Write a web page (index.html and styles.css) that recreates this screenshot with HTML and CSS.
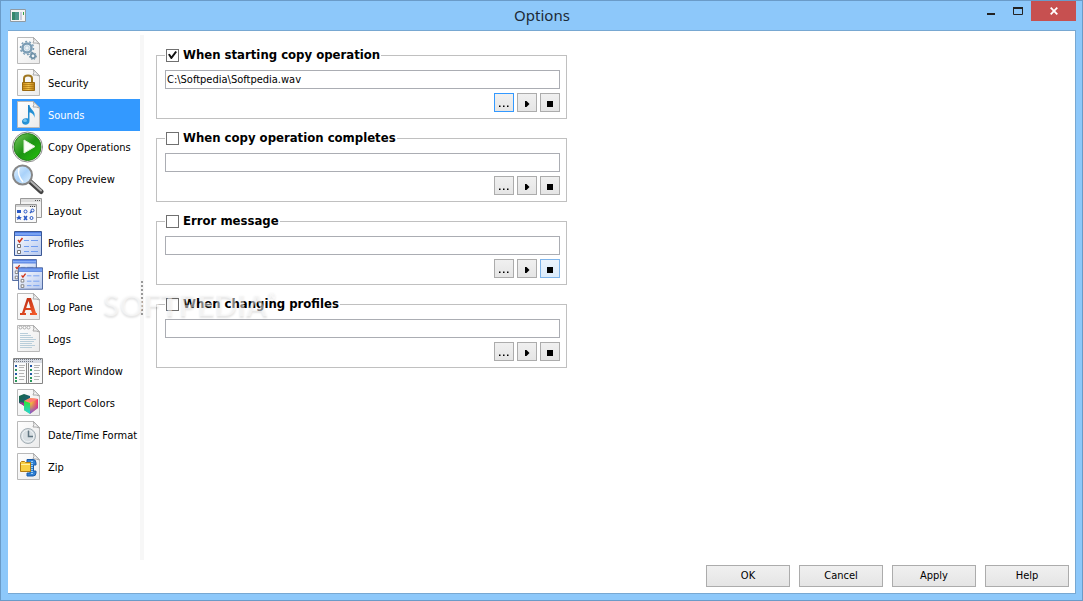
FILE: index.html
```html
<!DOCTYPE html>
<html lang="en">
<head>
<meta charset="utf-8">
<title>Options</title>
<link rel="stylesheet" href="styles.css">
</head>
<body>
<svg class="defs" aria-hidden="true">
  <defs>
    <linearGradient id="paper" x1="0" y1="0" x2="1" y2="1"><stop offset="0" stop-color="#fff"/><stop offset="1" stop-color="#ebebeb"/></linearGradient>
    <linearGradient id="gold" x1="0" y1="0" x2="1" y2="0"><stop offset="0" stop-color="#c98a14"/><stop offset=".5" stop-color="#f3c44c"/><stop offset="1" stop-color="#b47a10"/></linearGradient>
    <linearGradient id="bluebar" x1="0" y1="0" x2="0" y2="1"><stop offset="0" stop-color="#3a6bdc"/><stop offset=".5" stop-color="#8db4fa"/><stop offset="1" stop-color="#3c6cd8"/></linearGradient>
    <linearGradient id="pane" x1="0" y1="0" x2="1" y2="1"><stop offset="0" stop-color="#fff"/><stop offset="1" stop-color="#b5c8ee"/></linearGradient>
    <linearGradient id="green" x1="0" y1="0" x2="1" y2="1"><stop offset="0" stop-color="#7cc763"/><stop offset=".5" stop-color="#1c9413"/><stop offset="1" stop-color="#26c40c"/></linearGradient>
    <linearGradient id="note" x1="0" y1="0" x2="1" y2="1"><stop offset="0" stop-color="#1672b8"/><stop offset="1" stop-color="#2fa6e8"/></linearGradient>
    <linearGradient id="red" x1="0" y1="0" x2="1" y2="1"><stop offset="0" stop-color="#b3220c"/><stop offset="1" stop-color="#f8602e"/></linearGradient>
    <linearGradient id="rainbow" x1="0" y1="0" x2="1" y2="0"><stop offset="0" stop-color="#18e020"/><stop offset=".5" stop-color="#f4f020"/><stop offset="1" stop-color="#f02878"/></linearGradient>
    <linearGradient id="limecyan" x1="0" y1="0" x2="0" y2="1"><stop offset="0" stop-color="#2ee432"/><stop offset="1" stop-color="#27cfe5"/></linearGradient>
    <linearGradient id="pinkblue" x1="0" y1="0" x2="0" y2="1"><stop offset="0" stop-color="#f53a5a" stop-opacity="0"/><stop offset="1" stop-color="#6a4bf0"/></linearGradient>
    <linearGradient id="dark" x1="0" y1="0" x2="1" y2="1"><stop offset="0" stop-color="#136840"/><stop offset="1" stop-color="#205a90"/></linearGradient>
    <linearGradient id="glass" x1="0" y1="0" x2="1" y2="1"><stop offset="0" stop-color="#e8f5ff"/><stop offset=".5" stop-color="#a9d2fa"/><stop offset="1" stop-color="#e2f3ff"/></linearGradient>
    <symbol id="doc" viewBox="0 0 32 32">
      <path d="M5.5 2.500H21.500L27.500 8.500V28.500H5.500Z" fill="url(#paper)" stroke="#b9b9b9"/>
      <path d="M21.500 2.500Q22.500 6 21 8Q24 7.500 27.500 9Z" fill="#f5f5f5" stroke="#a8a8a8"/>
    </symbol>
    <symbol id="list" viewBox="0 0 28 25">
      <path d="M.5.5H27.500V24.500H.5Z" fill="url(#pane)" stroke="#3a5794"/>
      <path d="M1 1H27V5H1Z" fill="url(#bluebar)"/>
      <path d="M4 9L5.500 11L8.500 7" fill="none" stroke="#cf3218" stroke-width="1.500"/>
      <path d="M3.500 13.500H6.500V16.500H3.500ZM3.500 19.500H6.500V22.500H3.500Z" fill="#fff" stroke="#777"/>
      <path d="M10 9.500H15M17 9.500H24M10 15.500H15M17 15.500H24M10 20.500H15M17 20.500H24" stroke="#6f9cf0"/>
    </symbol>
    <symbol id="dots" viewBox="0 0 18 17"><path d="M4 11.500H5.500V13H4ZM8 11.500H9.500V13H8ZM12 11.500H13.500V13H12Z"/></symbol>
    <symbol id="play" viewBox="0 0 18 17"><path d="M7 7H8.500L11.500 10L8.500 13H7Z"/></symbol>
    <symbol id="stop" viewBox="0 0 18 17"><path d="M6 7H12V13H6Z"/></symbol>
  </defs>
</svg>

<div class="window">
  <header class="titlebar">
    <svg class="app-icon" width="16" height="14" viewBox="0 0 16 14" aria-hidden="true">
      <path d="M.5.5H15.500V12.500H.5Z" fill="#f4f4f4" stroke="#8f9aa3"/><path d="M2 3H9V11H2Z" fill="#35876c"/><path d="M5 3H9V11H5Z" fill="#5b9fa0" opacity=".6"/><path d="M10 3H12V11H10Z" fill="#ccd"/><path d="M13 3H14V6H13Z" fill="#36a14a"/>
    </svg>
    <h1 class="title">Options</h1>
    <div class="window-controls">
      <button class="control" type="button" aria-label="Minimize"><svg width="8" height="10" viewBox="0 0 8 10"><path d="M0 7H8V9H0Z" fill="#222"/></svg></button>
      <button class="control" type="button" aria-label="Maximize"><svg width="10" height="8" viewBox="0 0 10 8"><path d="M.5 1H9.500V7.500H.5Z" fill="none" stroke="#222"/><path d="M0 0H10V2H0Z" fill="#222"/></svg></button>
      <button class="control close" type="button" aria-label="Close"><svg width="8" height="8" viewBox="0 0 8 8"><path d="M.7.700L7.300 7.300M7.300.700L.7 7.300" stroke="#fff" stroke-width="1.800"/></svg></button>
    </div>
  </header>

  <main class="client">
    <div class="content">
      <nav class="sidebar" aria-label="Option pages">
        <button class="page" type="button"><svg class="icon" viewBox="0 0 32 32"><use href="#doc"/><circle cx="15" cy="13" r="4.500" fill="#eef4f8" stroke="#7b9db5" stroke-width="2.500"/><circle cx="15" cy="13" r="6.500" fill="none" stroke="#7b9db5" stroke-width="1.500" stroke-dasharray="2 2"/><circle cx="15" cy="13" r="2.200" fill="none" stroke="#b8cedc"/><circle cx="21" cy="21" r="2.200" fill="#eef4f8" stroke="#6489a2" stroke-width="1.500"/><circle cx="21" cy="21" r="3.500" fill="none" stroke="#6489a2" stroke-dasharray="1.500 1.500"/></svg>General</button>
        <button class="page" type="button"><svg class="icon" viewBox="0 0 32 32"><use href="#doc"/><path d="M12 16V11.500Q12 8.500 16 8.500T20 11.500V16" fill="none" stroke="#9e7620" stroke-width="2"/><path d="M10.500 15.500H22.500V23.500H10.500Z" fill="url(#gold)" stroke="#9a6911"/><path d="M11 17.500H22M11 19.500H22M11 21.500H22" stroke="#a97212" opacity=".7"/></svg>Security</button>
        <button class="page selected" type="button" aria-current="page"><svg class="icon" viewBox="0 0 32 32"><use href="#doc"/><path d="M16 6H17.500C18 11 24 11 22.500 19C22 15 19 13.500 17.500 13.500V22C17.500 27 10 27 10 22.500C10 19.500 13.500 18.500 16 19.500Z" fill="url(#note)"/><ellipse cx="13" cy="21.500" rx="2" ry="1.500" fill="#6cc2f2"/></svg>Sounds</button>
        <button class="page" type="button"><svg class="icon" viewBox="0 0 32 32"><circle cx="15.500" cy="16" r="15" fill="#fff" stroke="#8a8a8a"/><circle cx="15.500" cy="16" r="13.500" fill="url(#green)" stroke="#267d1c"/><path d="M12 9L23 15.500L12 22Z" fill="#fafff7" stroke="#dcefd5"/></svg>Copy Operations</button>
        <button class="page" type="button"><svg class="icon" viewBox="0 0 32 32"><path d="M17.500 18L29 28.500" stroke="#444" stroke-width="5" stroke-linecap="round"/><path d="M18.500 18L29 27.500" stroke="#b2b2b2" stroke-width="2" stroke-linecap="round"/><circle cx="10.500" cy="12" r="9.500" fill="url(#glass)" stroke="#878787" stroke-width="2"/><path d="M7 5Q5 12 11 19" fill="none" stroke="#fff" stroke-width="1.500"/></svg>Copy Preview</button>
        <button class="page" type="button"><svg class="icon" viewBox="0 0 32 32"><path d="M8.500 3.500H29.500V22.500H8.500Z" fill="#f1f1f1" stroke="#999"/><path d="M9 4H29V7H9Z" fill="#ddd"/><path d="M23 5.500H24M25 5.500H26M27 5.500H28" stroke="#555"/><path d="M3.500 9.500H24.500V27.500H3.500Z" fill="#fafafa" stroke="#999"/><path d="M4 10H24V12H4Z" fill="#d2d2d2"/><path d="M18 11.500H19M20 11.500H21M22 11.500H23" stroke="#444"/><path d="M5 15H9V18H5ZM7 20L8 22H10L8.500 23L9 25L7 24L5 25L5.500 23L4 22H6Z" fill="#2857c4"/><path d="M12 21L15 25M15 21L12 25M18 18L20 16" stroke="#2857c4" stroke-width="1.500"/><g fill="none" stroke="#2857c4"><circle cx="13.500" cy="16.500" r="1.500"/><circle cx="20.500" cy="15.500" r="1.500"/><circle cx="19.500" cy="23" r="1.500"/></g></svg>Layout</button>
        <button class="page" type="button"><svg class="icon" viewBox="0 0 32 32"><use href="#list" x="2" y="4" width="28" height="25"/></svg>Profiles</button>
        <button class="page" type="button"><svg class="icon" viewBox="0 0 32 32"><use href="#list" x="0" y="0" width="25" height="22"/><use href="#list" x="6" y="8" width="25" height="23"/></svg>Profile List</button>
        <button class="page" type="button"><svg class="icon" viewBox="0 0 32 32"><use href="#doc"/><path fill-rule="evenodd" d="M15 7H19L24 22H25V24H18V22H20L19 19H13.500L12.500 22H14V24H8V22H10ZM16.500 10L14.200 17H18.500Z" fill="url(#red)"/></svg>Log Pane</button>
        <button class="page" type="button"><svg class="icon" viewBox="0 0 32 32"><use href="#doc"/><g fill="#fff" stroke="#aaa"><circle cx="8.500" cy="4.500" r="1.500"/><circle cx="12.500" cy="4.500" r="1.500"/><circle cx="16.500" cy="4.500" r="1.500"/></g><path d="M8 10.500H16M8 12.500H19M8 14.500H21M8 16.500H24M8 18.500H22M8 20.500H20M8 22.500H23M8 24.500H20" stroke="#b9ceda"/></svg>Logs</button>
        <button class="page" type="button"><svg class="icon" viewBox="0 0 32 32"><path d="M1.500 3.500H30.500V28.500H1.500Z" fill="#fafafa" stroke="#858585"/><path d="M2 4H30V8H2Z" fill="#d8dce4"/><path d="M2 4.500H30M2 6.500H22" stroke="#737b87" stroke-dasharray="1 1"/><path d="M14.500 8V28M16.500 8V28" stroke="#888"/><path d="M3 11H5M18 11H20M3 19H5M18 19H20" stroke="#2457a6" stroke-width="2"/><path d="M3 15H5M18 15H20M3 23H5M18 23H20M3 26H5M18 26H20" stroke="#29985a" stroke-width="2"/><path d="M7 10.500H13M22 10.500H28M7 12.500H12M22 12.500H27M7 15.500H13M22 15.500H28M7 18.500H12M22 18.500H27M7 21.500H13M22 21.500H28M7 24.500H12M22 24.500H27" stroke="#b4b4b4"/></svg>Report Window</button>
        <button class="page" type="button"><svg class="icon" viewBox="0 0 32 32"><use href="#doc"/><path d="M7 9L12 7L18 9V17L13 19L7 16Z" fill="url(#dark)"/><path d="M7 15L13 16V20Z" fill="#a82e91"/><path d="M12 14L18 11L26 12V21L18 27L12 23Z" fill="url(#rainbow)"/><path d="M12 14L18 11L26 12L18 16Z" fill="#ff8175"/><path d="M12 14L18 16V27L12 23Z" fill="url(#limecyan)"/><path d="M18 16L26 12V21L18 27Z" fill="url(#pinkblue)"/></svg>Report Colors</button>
        <button class="page" type="button"><svg class="icon" viewBox="0 0 32 32"><use href="#doc"/><circle cx="16" cy="17" r="7.500" fill="#d8dfe3" stroke="#a5afb5"/><circle cx="16" cy="17" r="5.800" fill="none" stroke="#edf1f3"/><path d="M16.500 11.500V17.500H21" fill="none" stroke="#607580" stroke-width="1.500"/></svg>Date/Time Format</button>
        <button class="page" type="button"><svg class="icon" viewBox="0 0 32 32"><use href="#doc"/><path d="M15 8.500H21Q24 8.500 24 12V14H21.500V20H24V22Q24 25 21 25H15V22H18V12H15Z" fill="#2f7fd4" stroke="#1b5aa5"/><path d="M20 10V24" stroke="#9bd0f4" stroke-width="2" stroke-dasharray="1 1"/><path d="M8.500 11.500L9.500 10.500H12.500L13.500 11.500H18.500V20.500H8.500Z" fill="#f8cf43" stroke="#b07b13"/><path d="M9 13.500H18" stroke="#fff0a4"/></svg>Zip</button>
      </nav>
      <div class="splitter"><div class="grip"></div></div>

      <form class="sounds">
        <fieldset class="group">
          <legend class="legend"><input class="check" type="checkbox" id="start" checked><label for="start">When starting copy operation</label></legend>
          <input class="path" type="text" aria-label="Starting sound file" value="C:\Softpedia\Softpedia.wav">
          <div class="tools"><button class="tool current" type="button" aria-label="Browse"><svg class="glyph"><use href="#dots"/></svg></button><button class="tool" type="button" aria-label="Play"><svg class="glyph"><use href="#play"/></svg></button><button class="tool" type="button" aria-label="Stop"><svg class="glyph"><use href="#stop"/></svg></button></div>
        </fieldset>
        <fieldset class="group">
          <legend class="legend"><input class="check" type="checkbox" id="complete"><label for="complete">When copy operation completes</label></legend>
          <input class="path" type="text" aria-label="Completion sound file">
          <div class="tools"><button class="tool" type="button" aria-label="Browse"><svg class="glyph"><use href="#dots"/></svg></button><button class="tool" type="button" aria-label="Play"><svg class="glyph"><use href="#play"/></svg></button><button class="tool" type="button" aria-label="Stop"><svg class="glyph"><use href="#stop"/></svg></button></div>
        </fieldset>
        <fieldset class="group">
          <legend class="legend"><input class="check" type="checkbox" id="error"><label for="error">Error message</label></legend>
          <input class="path" type="text" aria-label="Error sound file">
          <div class="tools"><button class="tool" type="button" aria-label="Browse"><svg class="glyph"><use href="#dots"/></svg></button><button class="tool" type="button" aria-label="Play"><svg class="glyph"><use href="#play"/></svg></button><button class="tool hot" type="button" aria-label="Stop"><svg class="glyph"><use href="#stop"/></svg></button></div>
        </fieldset>
        <fieldset class="group">
          <legend class="legend"><input class="check" type="checkbox" id="profiles"><label for="profiles">When changing profiles</label></legend>
          <input class="path" type="text" aria-label="Profile change sound file">
          <div class="tools"><button class="tool" type="button" aria-label="Browse"><svg class="glyph"><use href="#dots"/></svg></button><button class="tool" type="button" aria-label="Play"><svg class="glyph"><use href="#play"/></svg></button><button class="tool" type="button" aria-label="Stop"><svg class="glyph"><use href="#stop"/></svg></button></div>
        </fieldset>
      </form>
    </div>

    <footer class="actions">
      <button class="action" type="button">OK</button>
      <button class="action" type="button">Cancel</button>
      <button class="action" type="button">Apply</button>
      <button class="action" type="button">Help</button>
    </footer>
  </main>
  <div class="watermark">SOFTPEDIA<span class="mark">®</span></div>
</div>
</body>
</html>
```
FILE: styles.css
```css
* { box-sizing: border-box; }

body {
  margin: 0;
  font: 11px/16px "DejaVu Sans Condensed", "DejaVu Sans", sans-serif;
  color: #000;
}

button, input { font: inherit; color: inherit; margin: 0; }

.defs { position: absolute; width: 0; height: 0; }

.window {
  position: relative;
  display: flex;
  flex-direction: column;
  min-height: 100vh;
  padding: 0 6px 6px 7px;
  border: 1px solid #6a9bc8;
  background: #8dc8fa;
}

.titlebar {
  display: grid;
  grid-template-columns: 1fr auto 1fr;
  height: 29px;
}

.app-icon { margin: 8px 0 0 2px; }

.title {
  margin: 0;
  font: 15px/29px "Noto Sans", sans-serif;
  color: #1c2a36;
}

.window-controls { display: flex; justify-content: flex-end; }

.control {
  display: flex;
  align-items: center;
  justify-content: center;
  width: 27px;
  height: 20px;
  padding: 0;
  border: 0;
  background: none;
}

.close { width: 45px; background: #c75050; }

.client {
  flex: 1;
  display: flex;
  flex-direction: column;
  padding: 4px 6px 6px 4px;
  border: 1px solid #78a8d2;
  border-left: 0;
  background: #fff;
}

.content { flex: 1; display: flex; }

.sidebar { width: 128px; flex: none; }

.page {
  display: flex;
  align-items: center;
  gap: 4px;
  width: 100%;
  height: 32px;
  padding: 2px 0 0;
  border: 0;
  background: none;
  white-space: nowrap;
  text-align: left;
}

.selected { background: #3399ff; color: #fff; }

.icon { width: 32px; height: 32px; flex: none; margin-top: -2px; }

.splitter {
  display: flex;
  align-items: center;
  justify-content: center;
  width: 4px;
  flex: none;
  background: #f7f7f7;
}

.grip { height: 34px; border-left: 2px dotted #999; }

.sounds {
  flex: 1;
  display: flex;
  flex-direction: column;
  gap: 11px;
  max-width: 423px;
  padding: 12px 0 12px 12px;
}

.group {
  min-width: 0;
  margin: 0;
  padding: 7px 6px 6px 8px;
  border: 1px solid #c0c0c0;
}

.legend {
  display: flex;
  align-items: center;
  gap: 4px;
  height: 16px;
  padding: 0 1px;
  font-size: 13px;
  font-weight: bold;
}

.check {
  appearance: none;
  width: 13px;
  height: 13px;
  border: 1px solid #707070;
  background: #fff;
}

.check:checked { display: grid; place-items: center; }

.check:checked::before {
  content: "";
  width: 9px;
  height: 8px;
  background: #111;
  clip-path: polygon(0 45%, 20% 35%, 38% 65%, 82% 0, 100% 12%, 42% 100%, 32% 100%);
}

.path {
  display: block;
  width: 100%;
  height: 19px;
  padding: 0 1px;
  border: 1px solid #abadb3;
  background: #fff;
}

.tools {
  display: flex;
  justify-content: flex-end;
  gap: 3px;
  margin-top: 4px;
}

.tool {
  width: 20px;
  height: 19px;
  padding: 0;
  border: 1px solid #acacac;
  background: linear-gradient(#f0f0f0, #e5e5e5);
}

.glyph { display: block; width: 18px; height: 17px; }
.current { border-color: #3399ff; }
.hot { border-color: #7eb4ea; background: linear-gradient(#ecf4fc, #dcecfc); }

.actions {
  display: flex;
  justify-content: flex-end;
  gap: 9px;
  padding-top: 5px;
}

.action {
  width: 84px;
  height: 22px;
  padding: 0;
  border: 1px solid #acacac;
  background: linear-gradient(#f0f0f0, #e5e5e5);
}

.watermark {
  position: absolute;
  left: 102px;
  top: 285px;
  display: flex;
  font: bold 30px/36px Lato, sans-serif;
  color: rgba(255, 255, 255, 0.5);
  text-shadow: 0 2px 2px rgba(0, 0, 0, 0.1);
  pointer-events: none;
}

.mark { font-size: 11px; line-height: 20px; }
```
